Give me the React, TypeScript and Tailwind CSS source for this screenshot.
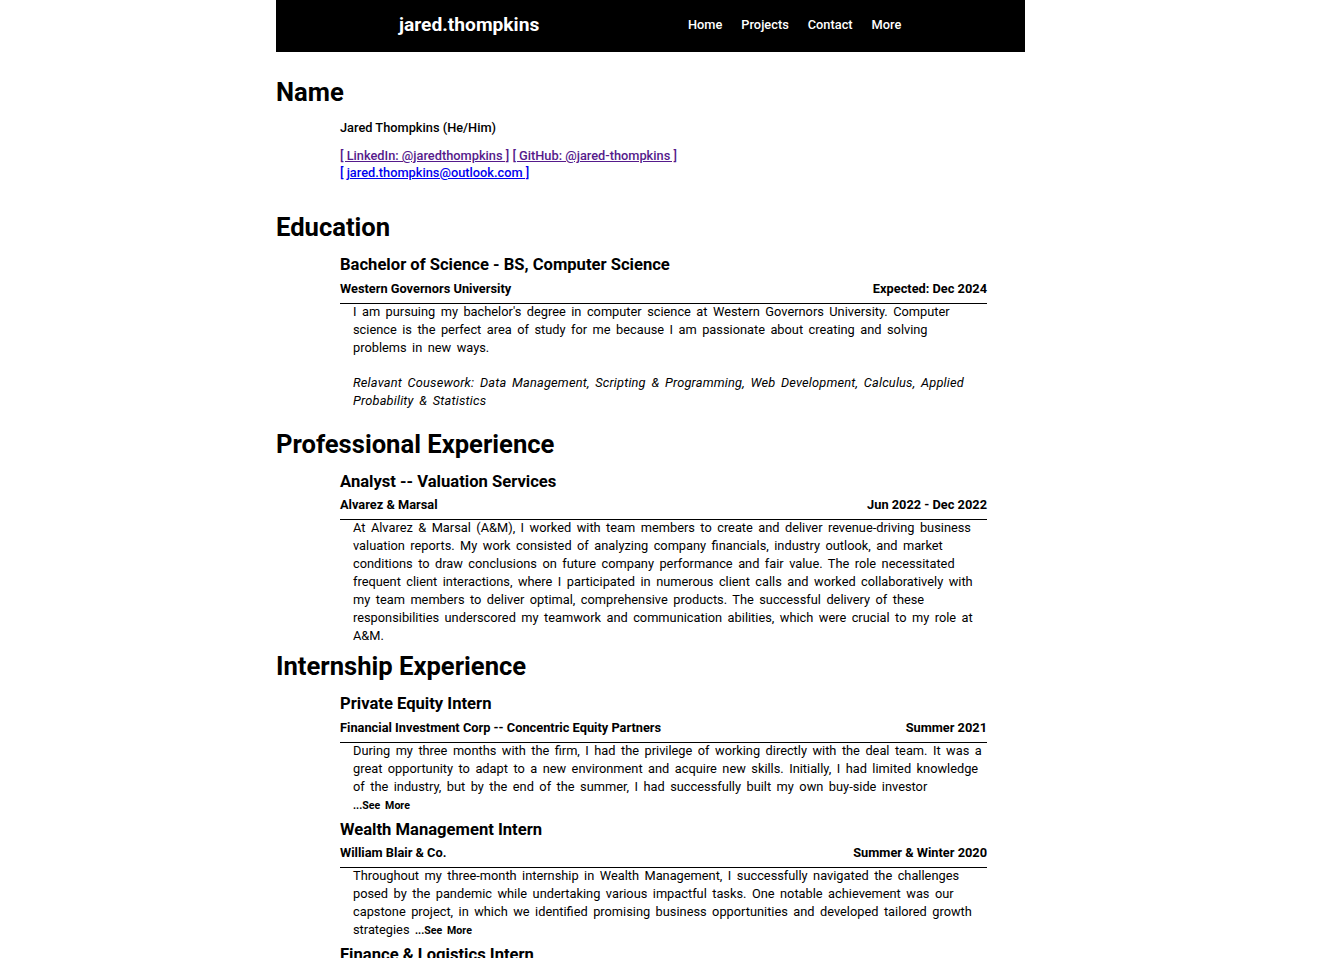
import type { ReactNode } from "react";

function Section({ title, last, children }: { title: string; last?: boolean; children: ReactNode }) {
  return (
    <section className={last ? "" : "mb-[5px]"}>
      <h1 className="text-[25.6px] leading-[32px] font-bold">{title}</h1>
      <div className="pl-[64px] w-[711px] flex flex-col gap-[4px]">{children}</div>
    </section>
  );
}

function Entry({
  title,
  org,
  date,
  children,
}: {
  title: string;
  org: string;
  date: string;
  children: ReactNode;
}) {
  return (
    <div>
      <h2 className="text-[16.6px] leading-[22px] font-bold">{title}</h2>
      <div className="mt-[3.5px] flex justify-between border-b border-black pb-[5px] text-[12.8px] leading-[18px] font-bold">
        <span>{org}</span>
        <span>{date}</span>
      </div>
      <div className="-mt-[1px] pl-[13px] pr-[3px] text-[12.8px] leading-[18px] [word-spacing:2.3px]">{children}</div>
    </div>
  );
}

function SeeMore() {
  return <span className="text-[10.6px] font-bold cursor-pointer">...See More</span>;
}

export default function App() {
  return (
    <div className="bg-white min-h-screen font-['Roboto',sans-serif] text-black">
      <div className="ml-[276px] w-[749px]">
        <header className="h-[52px] pb-[2px] bg-black text-white flex items-center">
          <div className="pl-[123px] w-[412px] text-[19.2px] font-bold">jared.thompkins</div>
          <nav className="flex gap-[19px] text-[12.8px] font-medium">
            <a href="#">Home</a>
            <a href="#">Projects</a>
            <a href="#">Contact</a>
            <a href="#">More</a>
          </nav>
        </header>

        <main className="pt-[24px] pb-[40px]">
          <Section title="Name">
            <div className="mt-[11px] mb-[25px] text-[12.8px] leading-[17px] font-medium">
              <p>Jared Thompkins (He/Him)</p>
              <div className="mt-[11px]">
                <a href="#" className="text-[#551a8b] underline">[ LinkedIn: @jaredthompkins ]</a>{" "}
                <a href="#" className="text-[#551a8b] underline">[ GitHub: @jared-thompkins ]</a>
                <br />
                <a href="#" className="text-[#0000ee] underline">[ jared.thompkins@outlook.com ]</a>
              </div>
            </div>
          </Section>

          <Section title="Education">
            <div className="mt-[11px]">
              <Entry title="Bachelor of Science - BS, Computer Science" org="Western Governors University" date="Expected: Dec 2024">
                <p>
                  I am pursuing my bachelor's degree in computer science at Western Governors University. Computer
                  science is the perfect area of study for me because I am passionate about creating and solving
                  problems in new ways.
                </p>
                <p className="mt-[17px] mb-[13px] italic tracking-[0.18px]">
                  Relavant Cousework: Data Management, Scripting &amp; Programming, Web Development, Calculus, Applied
                  Probability &amp; Statistics
                </p>
              </Entry>
            </div>
          </Section>

          <Section title="Professional Experience">
            <div className="mt-[11px]">
              <Entry title="Analyst -- Valuation Services" org="Alvarez & Marsal" date="Jun 2022 - Dec 2022">
                <p>
                  At Alvarez &amp; Marsal (A&amp;M), I worked with team members to create and deliver revenue-driving
                  business valuation reports. My work consisted of analyzing company financials, industry outlook, and
                  market conditions to draw conclusions on future company performance and fair value. The role
                  necessitated frequent client interactions, where I participated in numerous client calls and worked
                  collaboratively with my team members to deliver optimal, comprehensive products. The successful
                  delivery of these responsibilities underscored my teamwork and communication abilities, which were
                  crucial to my role at A&amp;M.
                </p>
              </Entry>
            </div>
          </Section>

          <Section title="Internship Experience" last>
            <div className="mt-[11px]">
              <Entry
                title="Private Equity Intern"
                org="Financial Investment Corp -- Concentric Equity Partners"
                date="Summer 2021"
              >
                <p>
                  During my three months with the firm, I had the privilege of working directly with the deal team. It
                  was a great opportunity to adapt to a new environment and acquire new skills. Initially, I had limited
                  knowledge of the industry, but by the end of the summer, I had successfully built my own buy-side
                  investor
                </p>
                <SeeMore />
              </Entry>
            </div>
            <Entry title="Wealth Management Intern" org="William Blair & Co." date="Summer & Winter 2020">
              <p>
                Throughout my three-month internship in Wealth Management, I successfully navigated the challenges
                posed by the pandemic while undertaking various impactful tasks. One notable achievement was our
                capstone project, in which we identified promising business opportunities and developed tailored
                growth strategies <SeeMore />
              </p>
            </Entry>
            <Entry title="Finance & Logistics Intern" org="Ferrellgas" date="Summer 2019">
              <p>
                During my internship, I supported the finance and logistics teams with data analysis and reporting.
              </p>
            </Entry>
          </Section>
        </main>
      </div>
    </div>
  );
}
